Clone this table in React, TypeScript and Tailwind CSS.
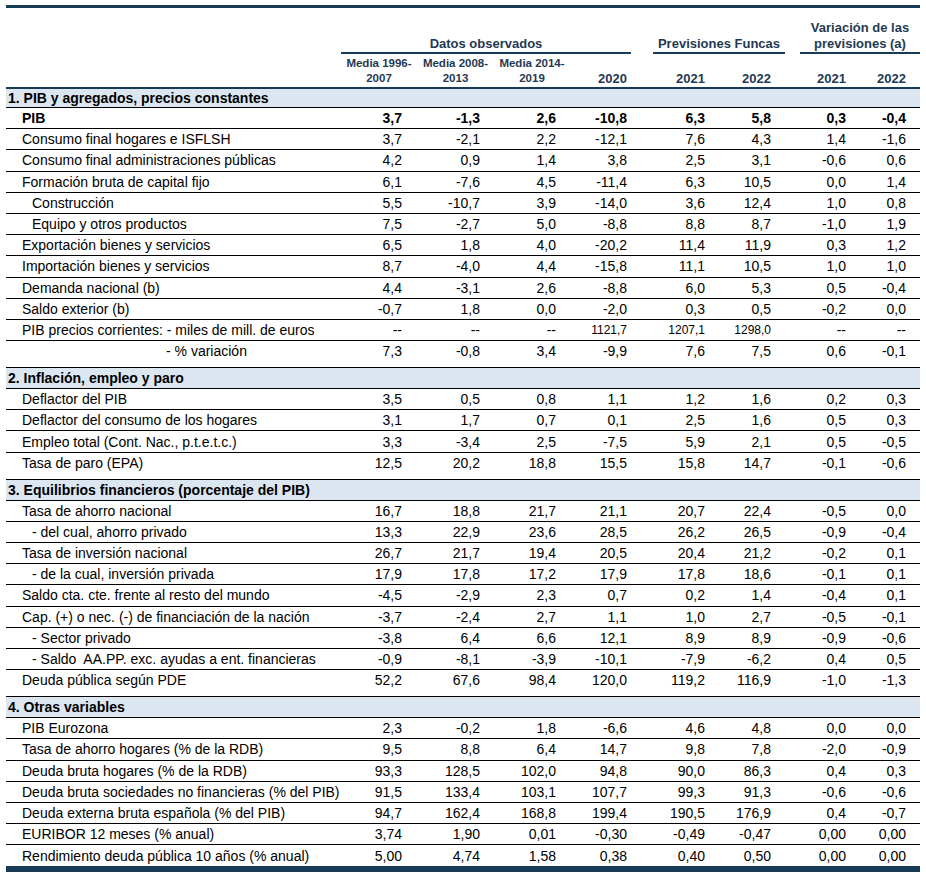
import React from 'react';

type Row = {
  label: string;
  vals: string[];
  indent?: 'sub' | 'far';
  bold?: boolean;
  tall?: boolean;
  small?: boolean;
};

type Section = { title: string; rows: Row[] };

const GRID = 'grid grid-cols-[335px_76px_77px_76px_71px_78px_66px_75px_60px]';

const sections: Section[] = [
  {
    title: '1. PIB y agregados, precios constantes',
    rows: [
      { label: 'PIB', vals: ['3,7', '-1,3', '2,6', '-10,8', '6,3', '5,8', '0,3', '-0,4'], bold: true },
      { label: 'Consumo final hogares e ISFLSH', vals: ['3,7', '-2,1', '2,2', '-12,1', '7,6', '4,3', '1,4', '-1,6'] },
      { label: 'Consumo final administraciones públicas', vals: ['4,2', '0,9', '1,4', '3,8', '2,5', '3,1', '-0,6', '0,6'] },
      { label: 'Formación bruta de capital fijo', vals: ['6,1', '-7,6', '4,5', '-11,4', '6,3', '10,5', '0,0', '1,4'] },
      { label: 'Construcción', vals: ['5,5', '-10,7', '3,9', '-14,0', '3,6', '12,4', '1,0', '0,8'], indent: 'sub' },
      { label: 'Equipo y otros productos', vals: ['7,5', '-2,7', '5,0', '-8,8', '8,8', '8,7', '-1,0', '1,9'], indent: 'sub' },
      { label: 'Exportación bienes y servicios', vals: ['6,5', '1,8', '4,0', '-20,2', '11,4', '11,9', '0,3', '1,2'] },
      { label: 'Importación bienes y servicios', vals: ['8,7', '-4,0', '4,4', '-15,8', '11,1', '10,5', '1,0', '1,0'] },
      { label: 'Demanda nacional (b)', vals: ['4,4', '-3,1', '2,6', '-8,8', '6,0', '5,3', '0,5', '-0,4'] },
      { label: 'Saldo exterior (b)', vals: ['-0,7', '1,8', '0,0', '-2,0', '0,3', '0,5', '-0,2', '0,0'] },
      { label: 'PIB precios corrientes: - miles de mill. de euros', vals: ['--', '--', '--', '1121,7', '1207,1', '1298,0', '--', '--'], small: true },
      { label: '- % variación', vals: ['7,3', '-0,8', '3,4', '-9,9', '7,6', '7,5', '0,6', '-0,1'], indent: 'far', tall: true },
    ],
  },
  {
    title: '2. Inflación, empleo y paro',
    rows: [
      { label: 'Deflactor del PIB', vals: ['3,5', '0,5', '0,8', '1,1', '1,2', '1,6', '0,2', '0,3'] },
      { label: 'Deflactor del consumo de los hogares', vals: ['3,1', '1,7', '0,7', '0,1', '2,5', '1,6', '0,5', '0,3'] },
      { label: 'Empleo total (Cont. Nac., p.t.e.t.c.)', vals: ['3,3', '-3,4', '2,5', '-7,5', '5,9', '2,1', '0,5', '-0,5'] },
      { label: 'Tasa de paro (EPA)', vals: ['12,5', '20,2', '18,8', '15,5', '15,8', '14,7', '-0,1', '-0,6'], tall: true },
    ],
  },
  {
    title: '3. Equilibrios financieros (porcentaje del PIB)',
    rows: [
      { label: 'Tasa de ahorro nacional', vals: ['16,7', '18,8', '21,7', '21,1', '20,7', '22,4', '-0,5', '0,0'] },
      { label: '- del cual, ahorro privado', vals: ['13,3', '22,9', '23,6', '28,5', '26,2', '26,5', '-0,9', '-0,4'], indent: 'sub' },
      { label: 'Tasa de inversión nacional', vals: ['26,7', '21,7', '19,4', '20,5', '20,4', '21,2', '-0,2', '0,1'] },
      { label: '- de la cual, inversión privada', vals: ['17,9', '17,8', '17,2', '17,9', '17,8', '18,6', '-0,1', '0,1'], indent: 'sub' },
      { label: 'Saldo cta. cte. frente al resto del mundo', vals: ['-4,5', '-2,9', '2,3', '0,7', '0,2', '1,4', '-0,4', '0,1'] },
      { label: 'Cap. (+) o nec. (-) de financiación de la nación', vals: ['-3,7', '-2,4', '2,7', '1,1', '1,0', '2,7', '-0,5', '-0,1'] },
      { label: '- Sector privado', vals: ['-3,8', '6,4', '6,6', '12,1', '8,9', '8,9', '-0,9', '-0,6'], indent: 'sub' },
      { label: '- Saldo  AA.PP. exc. ayudas a ent. financieras', vals: ['-0,9', '-8,1', '-3,9', '-10,1', '-7,9', '-6,2', '0,4', '0,5'], indent: 'sub' },
      { label: 'Deuda pública según PDE', vals: ['52,2', '67,6', '98,4', '120,0', '119,2', '116,9', '-1,0', '-1,3'], tall: true },
    ],
  },
  {
    title: '4. Otras variables',
    rows: [
      { label: 'PIB Eurozona', vals: ['2,3', '-0,2', '1,8', '-6,6', '4,6', '4,8', '0,0', '0,0'] },
      { label: 'Tasa de ahorro hogares (% de la RDB)', vals: ['9,5', '8,8', '6,4', '14,7', '9,8', '7,8', '-2,0', '-0,9'] },
      { label: 'Deuda bruta hogares (% de la RDB)', vals: ['93,3', '128,5', '102,0', '94,8', '90,0', '86,3', '0,4', '0,3'] },
      { label: 'Deuda bruta sociedades no financieras (% del PIB)', vals: ['91,5', '133,4', '103,1', '107,7', '99,3', '91,3', '-0,6', '-0,6'] },
      { label: 'Deuda externa bruta española (% del PIB)', vals: ['94,7', '162,4', '168,8', '199,4', '190,5', '176,9', '0,4', '-0,7'] },
      { label: 'EURIBOR 12 meses (% anual)', vals: ['3,74', '1,90', '0,01', '-0,30', '-0,49', '-0,47', '0,00', '0,00'] },
      { label: 'Rendimiento deuda pública 10 años (% anual)', vals: ['5,00', '4,74', '1,58', '0,38', '0,40', '0,50', '0,00', '0,00'] },
    ],
  },
];

function DataRow({ row, last }: { row: Row; last: boolean }) {
  const pad = row.indent === 'far' ? 'pl-[160px]' : row.indent === 'sub' ? 'pl-[26px]' : 'pl-[16px]';
  return (
    <div
      className={`${GRID} items-center ${row.tall ? 'h-[27px] pb-[6px]' : 'h-[21.2px]'} ${last ? '' : 'border-b border-black'} ${row.bold ? 'font-bold' : ''}`}
    >
      <div className={`${pad} whitespace-pre text-[14px]`}>{row.label}</div>
      {row.vals.map((v, i) => (
        <div
          key={i}
          className={`text-right ${i === 0 ? 'pr-[15px]' : 'pr-[14px]'} ${row.small && v !== '--' ? 'text-[12px]' : 'text-[14px]'}`}
        >
          {v}
        </div>
      ))}
    </div>
  );
}

export default function App() {
  return (
    <div className="bg-white min-h-[873px] pt-[5px] font-['Liberation_Sans',Arial,sans-serif] text-black leading-none">
      <div className="ml-[6px] w-[914px]">
        <div className="h-[3px] bg-[#173a55]" />

        {/* column headers */}
        <div className="text-[#1f3a52] font-bold">
          <div className={`${GRID} h-[46px] items-end`}>
            <div />
            <div className="col-span-4 mr-[10px] border-b-2 border-[#173a55] text-center text-[13px] leading-[16px]">
              Datos observados
            </div>
            <div className="col-span-2 ml-[12px] border-b-2 border-[#173a55] text-center text-[13px] leading-[16px]">
              Previsiones Funcas
            </div>
            <div className="col-span-2 ml-[15px] border-b-2 border-[#173a55] text-center text-[13px] leading-[16px]">
              Variación de las
              <br />
              previsiones (a)
            </div>
          </div>
          <div className={`${GRID} h-[33px] items-end pb-[1px]`}>
            <div />
            <div className="text-center text-[11.5px] leading-[15px]">Media 1996-<br />2007</div>
            <div className="text-center text-[11.5px] leading-[15px]">Media 2008-<br />2013</div>
            <div className="text-center text-[11.5px] leading-[15px]">Media 2014-<br />2019</div>
            <div className="text-right pr-[14px] text-[13px] leading-[15px]">2020</div>
            <div className="text-right pr-[14px] text-[13px] leading-[15px]">2021</div>
            <div className="text-right pr-[14px] text-[13px] leading-[15px]">2022</div>
            <div className="text-right pr-[14px] text-[13px] leading-[15px]">2021</div>
            <div className="text-right pr-[14px] text-[13px] leading-[15px]">2022</div>
          </div>
        </div>
        <div className="h-[2px] bg-[#173a55]" />

        {sections.map((s, si) => (
          <div key={s.title}>
            <div
              className={`flex items-center ${si === 0 ? 'h-[19px]' : 'h-[21px]'} border-b border-black bg-[#dce6f0] pl-[2px] text-[14px] font-bold`}
            >
              {s.title}
            </div>
            {s.rows.map((r, ri) => (
              <DataRow
                key={r.label}
                row={r}
                last={si === sections.length - 1 && ri === s.rows.length - 1}
              />
            ))}
          </div>
        ))}

        <div className="h-[6px] bg-[#173a55]" />
      </div>
    </div>
  );
}
